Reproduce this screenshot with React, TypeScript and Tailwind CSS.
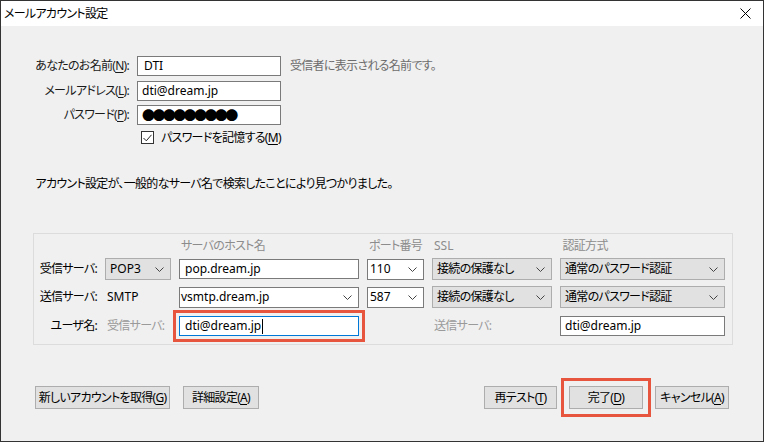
import React from "react";

function Chevron() {
  return (
    <svg width="9" height="5" viewBox="0 0 9 5" className="shrink-0">
      <polyline points="0.5,0.5 4.5,4.5 8.5,0.5" fill="none" stroke="#444" strokeWidth="1" />
    </svg>
  );
}

function Select({ label }: { label: string }) {
  return (
    <div className="h-[22px] bg-[#e1e1e1] border border-[#adadad] flex items-center justify-between pl-[4px] pr-[6px] whitespace-nowrap">
      <span>{label}</span>
      <Chevron />
    </div>
  );
}

function Combo({ value, pl = "pl-[2px]" }: { value: string; pl?: string }) {
  return (
    <div className={`h-[21px] mt-[0.5px] bg-white border border-[#7a7a7a] flex items-center justify-between ${pl} pr-[6px] tracking-normal`}>
      <span>{value}</span>
      <Chevron />
    </div>
  );
}

function TextBox({ value, extra = "" }: { value: React.ReactNode; extra?: string }) {
  return (
    <div className={`h-[20px] bg-white border border-[#7a7a7a] flex items-center pl-[4px] tracking-normal ${extra}`}>{value}</div>
  );
}

function Btn({ children, w }: { children: React.ReactNode; w: string }) {
  return (
    <div className={`h-[23px] ${w} bg-[#e1e1e1] border border-[#adadad] flex items-center justify-center whitespace-nowrap`}>
      {children}
    </div>
  );
}

const U = ({ c }: { c: string }) => <span className="underline underline-offset-2">{c}</span>;

export default function App() {
  return (
    <div className="w-[764px] h-[442px] border border-[#333333] bg-[#f0f0f0] flex flex-col text-[12px] leading-[16px] tracking-[-0.7px] text-black font-['Noto_Sans','Noto_Sans_CJK_JP',sans-serif] [font-feature-settings:'palt'] overflow-hidden">
      {/* title bar */}
      <div className="h-[25px] shrink-0 bg-white flex items-center justify-between pl-[3px] pr-[12px]">
        <span>メールアカウント設定</span>
        <svg width="11" height="11" viewBox="0 0 11 11">
          <path d="M0.5 0.5 L10.5 10.5 M10.5 0.5 L0.5 10.5" stroke="#000" strokeWidth="1" fill="none" />
        </svg>
      </div>

      <div className="flex-1 flex flex-col pl-[32px] pr-[30px] pt-[30px]">
        {/* account form */}
        <div className="grid grid-cols-[96px_144px_auto] gap-x-[8px] gap-y-[4.5px] items-center">
          <div className="text-right text-[#1a1a1a] whitespace-nowrap">
            あなたのお名前(<U c="N" />):
          </div>
          <TextBox value={<span className="pl-[2px]">DTI</span>} />
          <div className="ml-[1px] text-[#6d6d6d] whitespace-nowrap">受信者に表示される名前です。</div>

          <div className="text-right text-[#1a1a1a] whitespace-nowrap">
            メールアドレス(<U c="L" />):
          </div>
          <TextBox value="dti@dream.jp" />
          <div />

          <div className="text-right text-[#1a1a1a] whitespace-nowrap">
            パスワード(<U c="P" />):
          </div>
          <TextBox
            value={
              <span className="font-['Noto_Sans_CJK_JP',sans-serif] text-[13px] tracking-[-2.6px] leading-[16px]">
                ●●●●●●●●●
              </span>
            }
          />
          <div />

          <div className="col-start-2 h-[16px] flex items-center gap-[7px] ml-[4px]">
            <div className="w-[13px] h-[13px] border border-[#333] bg-white flex items-center justify-center shrink-0">
              <svg width="9" height="8" viewBox="0 0 9 8">
                <polyline points="0.5,4 3.3,6.8 8.5,0.8" fill="none" stroke="#222" strokeWidth="1" />
              </svg>
            </div>
            <span className="whitespace-nowrap">
              パスワードを記憶する(<U c="M" />)
            </span>
          </div>
        </div>

        {/* message */}
        <div className="mt-[30.5px] ml-[2.5px] whitespace-nowrap">アカウント設定が、一般的なサーバ名で検索したことにより見つかりました。</div>

        {/* server group */}
        <div className="mt-[41px] border border-[#dcdcdc] pl-[7px] pb-[2px]">
          <div className="grid grid-cols-[56px_66px_180px_57px_120px_165px] grid-rows-[24px_28px_28px_28px] gap-x-[8px] items-start">
            {/* header */}
            <div />
            <div />
            <div className="self-center pl-[2px] text-[#8c8c8c] whitespace-nowrap">サーバのホスト名</div>
            <div className="self-center pl-[2px] text-[#8c8c8c] whitespace-nowrap">ポート番号</div>
            <div className="self-center pl-[2px] text-[#8c8c8c] tracking-normal">SSL</div>
            <div className="self-center pl-[2.5px] text-[#8c8c8c] whitespace-nowrap">認証方式</div>

            {/* incoming */}
            <div className="h-[22px] flex items-center justify-end whitespace-nowrap">受信サーバ:</div>
            <div className="tracking-normal">
              <Select label="POP3" />
            </div>
            <TextBox value="pop.dream.jp" extra="mt-[1px] pl-[5px]" />
            <Combo value="110" />
            <Select label="接続の保護なし" />
            <Select label="通常のパスワード認証" />

            {/* outgoing */}
            <div className="h-[22px] flex items-center justify-end whitespace-nowrap">送信サーバ:</div>
            <div className="h-[22px] flex items-center pl-[2px] tracking-normal">SMTP</div>
            <Combo value="vsmtp.dream.jp" pl="pl-[1px]" />
            <Combo value="587" />
            <Select label="接続の保護なし" />
            <Select label="通常のパスワード認証" />

            {/* user */}
            <div className="h-[24px] flex items-center justify-end whitespace-nowrap">ユーザ名:</div>
            <div className="h-[24px] flex items-center pl-[2px] text-[#9a9a9a] whitespace-nowrap">受信サーバ:</div>
            <div className="relative mt-[2px]">
              <div className="h-[20px] bg-white border border-[#0078d7] flex items-center pl-[5px] tracking-normal">
                <span>dti@dream.jp</span>
                <span className="inline-block w-[1px] h-[15px] bg-black ml-[1px]" />
              </div>
              <div className="absolute -inset-[6px] border-[3px] border-[#e8553e] pointer-events-none" />
            </div>
            <div />
            <div className="h-[24px] flex items-center pl-[2px] text-[#9a9a9a] whitespace-nowrap">送信サーバ:</div>
            <TextBox value="dti@dream.jp" extra="mt-[2px]" />
          </div>
        </div>

        {/* buttons */}
        <div className="mt-[41px] flex justify-between pl-[2px] pr-[4px]">
          <div className="flex gap-[13px]">
            <Btn w="w-[135px]">
              新しいアカウントを取得(<U c="G" />)
            </Btn>
            <Btn w="w-[76px]">
              詳細設定(<U c="A" />)
            </Btn>
          </div>
          <div className="flex gap-[12px]">
            <Btn w="w-[73px]">
              再テスト(<U c="T" />)
            </Btn>
            <div className="relative">
              <Btn w="w-[74px]">
                完了(<U c="D" />)
              </Btn>
              <div className="absolute -inset-[8px] border-[3px] border-[#e8553e] pointer-events-none" />
            </div>
            <Btn w="w-[74px]">
              キャンセル(<U c="A" />)
            </Btn>
          </div>
        </div>
      </div>
    </div>
  );
}
